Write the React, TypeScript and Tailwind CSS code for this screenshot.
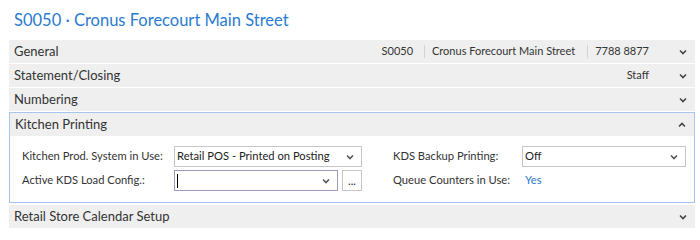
const font = { fontFamily: 'Lato, "Open Sans", sans-serif' };

function Chevron({ up = false, color = '#444' }: { up?: boolean; color?: string }) {
    return (
        <svg width="8" height="6" viewBox="0 0 8 6" className="shrink-0">
            {up ? (
                <path d="M1 4.5 L4 1.5 L7 4.5" fill="none" stroke={color} strokeWidth="1.6" />
            ) : (
                <path d="M1 1.5 L4 4.5 L7 1.5" fill="none" stroke={color} strokeWidth="1.6" />
            )}
        </svg>
    );
}

function SectionBar({ title, children, up }: { title: string; children?: React.ReactNode; up?: boolean }) {
    return (
        <div className="flex h-[23px] items-center bg-[#efefef] pl-[5px] pr-[8px] text-[13px] text-[#333]">
            <span className="flex-1">{title}</span>
            <div className="flex items-center text-[11px] text-[#333]">{children}</div>
            <div className="ml-[30px] flex w-[8px] justify-center">
                <Chevron up={up} />
            </div>
        </div>
    );
}

function SelectBox({ value, width, focused }: { value: string; width: string; focused?: boolean }) {
    return (
        <div
            className={`flex h-[21px] items-center border bg-white pl-[2px] pr-[7px] ${width} ${
                focused ? 'border-[#9a9bbf]' : 'border-[#c6c6c6]'
            }`}
        >
            <span className="flex flex-1 items-center truncate text-[11.2px] text-[#222]">
                {focused && <span className="inline-block h-[14px] w-px bg-black" />}
                {value}
            </span>
            <Chevron color="#555" />
        </div>
    );
}

export default function App() {
    return (
        <div className="h-[240px] w-[700px] bg-white" style={font}>
            <h1 className="px-[14px] pt-[8px] pb-[8px] text-[16.5px] leading-[24px] text-[#2a7bd2]">
                S0050 · Cronus Forecourt Main Street
            </h1>
            <div className="ml-[9px] mr-[5px] flex flex-col gap-px">
                <SectionBar title="General">
                    <span>S0050</span>
                    <span className="ml-[11px] mr-[7px] h-[13px] w-px bg-[#d3d3d3]" />
                    <span>Cronus Forecourt Main Street</span>
                    <span className="ml-[12px] mr-[7px] h-[13px] w-px bg-[#d3d3d3]" />
                    <span>7788 8877</span>
                </SectionBar>
                <SectionBar title="Statement/Closing">
                    <span>Staff</span>
                </SectionBar>
                <SectionBar title="Numbering" />
                <div className="mb-px border border-[#a7c6ef]">
                    <SectionBar title="Kitchen Printing" up />
                    <div className="grid grid-cols-[152px_219px_129px_1fr] items-center gap-y-[3px] pt-[10px] pb-[11px] pl-[12px] pr-[8px] text-[11.2px] text-[#333]">
                        <span className="whitespace-nowrap">Kitchen Prod. System in Use:</span>
                        <SelectBox value="Retail POS - Printed on Posting" width="w-[188px]" />
                        <span className="whitespace-nowrap">KDS Backup Printing:</span>
                        <SelectBox value="Off" width="w-full" />
                        <span className="whitespace-nowrap">Active KDS Load Config.:</span>
                        <div className="flex items-center gap-[4px]">
                            <SelectBox value="" width="w-[164px]" focused />
                            <div className="flex h-[21px] w-[20px] items-end justify-center border border-[#c6c6c6] bg-white pb-[4px] text-[11px] leading-none text-[#222]">
                                ...
                            </div>
                        </div>
                        <span className="whitespace-nowrap">Queue Counters in Use:</span>
                        <span className="pl-[3px] text-[#2a7bd2]">Yes</span>
                    </div>
                </div>
                <SectionBar title="Retail Store Calendar Setup" />
            </div>
        </div>
    );
}
